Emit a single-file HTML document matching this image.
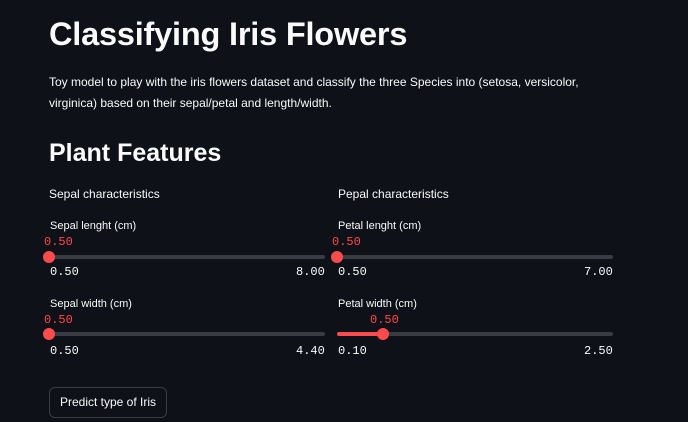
<!DOCTYPE html>
<html><head><style>
body{margin:0;width:688px;height:422px;background:#0e1117;color:#fafafa;font-family:"Liberation Sans",sans-serif;position:relative;overflow:hidden}
.a{position:absolute;white-space:nowrap}
.m{font-family:"Liberation Mono",monospace;font-size:12px}
.r{color:#ff4b4b}
.track{position:absolute;height:4px;background:#3a3c44;border-radius:2px}
.th{position:absolute;width:12px;height:12px;border-radius:50%;background:#ff4b4b}
.lab{font-size:11px}
</style></head><body>
<div class="a" style="left:49px;top:16px;font-size:32.5px;font-weight:bold;letter-spacing:-0.2px">Classifying Iris Flowers</div>
<div class="a" style="left:49px;top:72px;font-size:12px;line-height:21px">Toy model to play with the iris flowers dataset and classify the three Species into (setosa, versicolor,<br>virginica) based on their sepal/petal and length/width.</div>
<div class="a" style="left:49px;top:139px;font-size:25px;font-weight:bold">Plant Features</div>
<div class="a" style="left:49px;top:187px;font-size:12px">Sepal characteristics</div>
<div class="a" style="left:338px;top:187px;font-size:12px">Pepal characteristics</div>

<div class="a lab" style="left:50px;top:220px">Sepal lenght (cm)</div>
<div class="a m r" style="left:44px;top:235px">0.50</div>
<div class="track" style="left:49px;top:255px;width:276px"></div>
<div class="th" style="left:43px;top:251px"></div>
<div class="a m" style="left:50px;top:265px">0.50</div>
<div class="a m" style="left:296px;top:265px">8.00</div>

<div class="a lab" style="left:338px;top:220px">Petal lenght (cm)</div>
<div class="a m r" style="left:332px;top:235px">0.50</div>
<div class="track" style="left:337px;top:255px;width:276px"></div>
<div class="th" style="left:331px;top:251px"></div>
<div class="a m" style="left:338px;top:265px">0.50</div>
<div class="a m" style="left:584px;top:265px">7.00</div>

<div class="a lab" style="left:50px;top:298px">Sepal width (cm)</div>
<div class="a m r" style="left:44px;top:313px">0.50</div>
<div class="track" style="left:49px;top:332px;width:276px"></div>
<div class="th" style="left:43px;top:328px"></div>
<div class="a m" style="left:50px;top:344px">0.50</div>
<div class="a m" style="left:296px;top:344px">4.40</div>

<div class="a lab" style="left:338px;top:298px">Petal width (cm)</div>
<div class="a m r" style="left:370px;top:313px">0.50</div>
<div class="track" style="left:337px;top:332px;width:276px"></div>
<div class="track" style="left:337px;top:332px;width:46px;background:#ff4b4b"></div>
<div class="th" style="left:377px;top:328px"></div>
<div class="a m" style="left:338px;top:344px">0.10</div>
<div class="a m" style="left:584px;top:344px">2.50</div>

<div class="a" style="left:49px;top:387px;width:118px;height:31px;border:1px solid #3a3c44;border-radius:6px;box-sizing:border-box;font-size:12px;text-align:center;line-height:29px">Predict type of Iris</div>
</body></html>
